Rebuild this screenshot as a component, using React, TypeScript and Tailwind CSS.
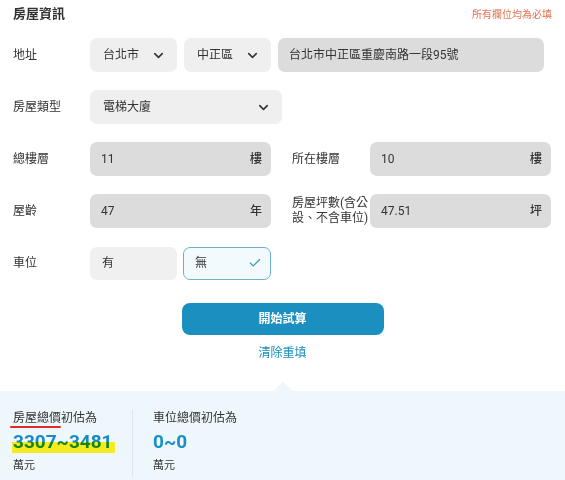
import { ChevronDown, Check } from "lucide-react";
import type { ReactNode } from "react";

const font = { fontFamily: 'Roboto, "Noto Sans CJK TC", sans-serif' };

function Row({ children }: { children: ReactNode }) {
  return <div className="flex items-center h-[34px]">{children}</div>;
}

function Label({ children, className = "w-[77px]" }: { children: ReactNode; className?: string }) {
  return <div className={`text-[12px] leading-[15px] text-[#333] shrink-0 ${className}`}>{children}</div>;
}

function Select({ value, width }: { value: string; width: string }) {
  return (
    <div className={`${width} h-[34px] rounded-[7px] bg-[#efefef] flex items-center justify-between pl-[13px] pr-[11px] text-[12px] text-[#333]`}>
      <span>{value}</span>
      <ChevronDown size={15} strokeWidth={2.5} className="text-[#333]" />
    </div>
  );
}

function Field({ value, unit, width = "w-[181px]" }: { value: string; unit?: string; width?: string }) {
  return (
    <div className={`${width} h-[34px] rounded-[7px] bg-[#dcdcdd] flex items-center justify-between pl-[11px] pr-[9px] text-[12px] text-[#333]`}>
      <span>{value}</span>
      {unit && <span className="font-medium">{unit}</span>}
    </div>
  );
}

export default function App() {
  return (
    <div style={font} className="w-[565px] h-[480px] bg-white overflow-hidden flex flex-col">
      {/* house info form */}
      <div className="px-[13px] pt-[4px]">
        <div className="flex items-center justify-between h-[20px] mb-[14px]">
          <h2 className="text-[13px] font-bold text-[#333]">房屋資訊</h2>
          <span className="text-[10px] text-[#e2714f]">所有欄位均為必填</span>
        </div>

        <div className="flex flex-col gap-[18px]">
          <Row>
            <Label>地址</Label>
            <div className="flex gap-[7px]">
              <Select value="台北市" width="w-[87px]" />
              <Select value="中正區" width="w-[87px]" />
              <Field value="台北市中正區重慶南路一段95號" width="w-[266px]" />
            </div>
          </Row>

          <Row>
            <Label>房屋類型</Label>
            <Select value="電梯大廈" width="w-[192px]" />
          </Row>

          <Row>
            <Label>總樓層</Label>
            <Field value="11" unit="樓" />
            <Label className="w-[78px] ml-[21px]">所在樓層</Label>
            <Field value="10" unit="樓" />
          </Row>

          <Row>
            <Label>屋齡</Label>
            <Field value="47" unit="年" />
            <Label className="w-[78px] ml-[21px]">
              房屋坪數(含公
              <br />
              設、不含車位)
            </Label>
            <Field value="47.51" unit="坪" />
          </Row>

          <Row>
            <Label>車位</Label>
            <div className="flex gap-[6px]">
              <div className="w-[87px] h-[33px] rounded-[7px] bg-[#f0f0f0] flex items-center pl-[12px] text-[12px] text-[#333]">有</div>
              <div className="w-[88px] h-[33px] rounded-[7px] bg-[#f2fafd] border border-[#6fb2c2] flex items-center justify-between pl-[11px] pr-[8px] text-[12px] text-[#333]">
                <span>無</span>
                <Check size={14} strokeWidth={2} className="text-[#3d99ad]" />
              </div>
            </div>
          </Row>
        </div>

        <div className="flex flex-col items-center mt-[23px]">
          <button className="w-[202px] h-[32px] rounded-[8px] bg-[#1a8fc0] text-white text-[12px] font-bold">開始試算</button>
          <button className="mt-[9px] text-[12px] text-[#1a8fc0]">清除重填</button>
        </div>
      </div>

      {/* estimate results */}
      <div className="relative mt-[29px] flex-1 bg-[#eef7fc] flex items-start pt-[19px]">
        <div className="absolute left-[274px] -top-[10px] w-0 h-0 border-l-[9px] border-r-[9px] border-b-[10px] border-l-transparent border-r-transparent border-b-[#eef7fc]" />
        <div className="w-[133px] pl-[13px] border-r border-[#dde6ea] flex flex-col items-start pb-[3px]">
          <div className="relative text-[12px] text-[#333] leading-[16px]">
            房屋總價初估為
            <div className="absolute -left-[3px] top-[16px] w-[51px] h-[2px] bg-[#e0282d] rounded" />
          </div>
          <div className="relative mt-[4px] h-[24px]">
            <div className="absolute -left-[1px] -right-[2px] top-[12px] h-[11px] bg-[#f4ec1e]" />
            <div className="relative mix-blend-multiply text-[19px] leading-[24px] font-bold text-[#1a8fc6]">3307~3481</div>
          </div>
          <div className="text-[11px] leading-[16px] text-[#333] mt-[4px]">萬元</div>
        </div>
        <div className="pl-[20px] flex flex-col items-start">
          <div className="text-[12px] text-[#333] leading-[16px]">車位總價初估為</div>
          <div className="mt-[4px] text-[19px] leading-[24px] font-bold text-[#1a8fc6]">0~0</div>
          <div className="text-[11px] leading-[16px] text-[#333] mt-[4px]">萬元</div>
        </div>
      </div>
    </div>
  );
}
